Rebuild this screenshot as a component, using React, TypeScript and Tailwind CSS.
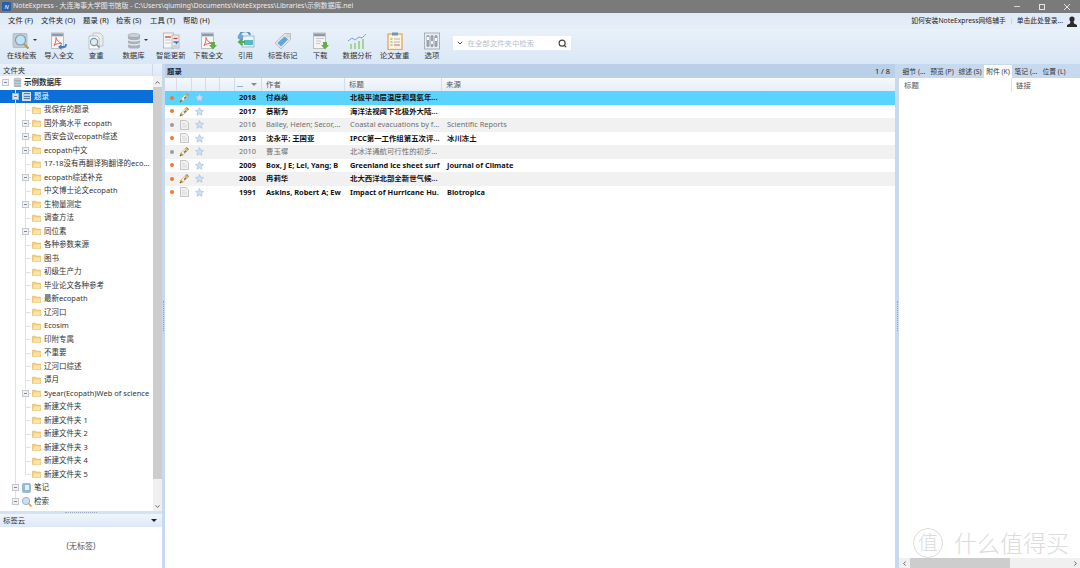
import React from 'react';
import { ChevronUp, ChevronDown, ChevronLeft, ChevronRight, Search } from 'lucide-react';

const Folder = () => (
  <svg width="9" height="8" viewBox="0 0 9 8" className="shrink-0">
    <path d="M.5 1.2h3l.8.9h4.2v5.4h-8z" fill="#f6cf7a" stroke="#e0b155" strokeWidth=".6" />
    <path d="M.8 7.400 2 3.400h6.800l-1 4z" fill="#fde4a6" />
  </svg>
);

const Db = ({ s = 18, c = '#a9b2ba' }: { s?: number; c?: string }) => (
  <svg width={s} height={s} viewBox="0 0 18 18" className="shrink-0">
    <rect x="3" y="2" width="12" height="14.500" rx="2.500" fill={c} />
    <ellipse cx="9" cy="3.500" rx="6" ry="2" fill="#ccd2d7" stroke="#8e979f" strokeWidth=".5" />
    <path d="M3 7.500c2 1.800 10 1.800 12 0M3 11.500c2 1.800 10 1.800 12 0" fill="none" stroke="#e8ecef" strokeWidth="1.100" />
  </svg>
);

const Expander = ({ dark }: { dark?: boolean }) => (
  <span className={`relative z-10 flex h-[7px] w-[7px] items-center justify-center border ${dark ? 'border-[#9db7d8] bg-[#d7e4f3]' : 'border-[#c4c9d0] bg-[#eef1f5]'}`}>
    <span className="h-px w-[3px] bg-[#7b8794]" />
  </span>
);

const Cell = ({ v, vHalf, h, exp, dark }: { v?: boolean; vHalf?: boolean; h?: boolean; exp?: boolean; dark?: boolean }) => (
  <span className="relative flex h-full w-[10px] shrink-0 items-center justify-center">
    {v && <span className={`absolute left-[5px] top-0 w-0 border-l border-[#e2e2e2] ${vHalf ? 'h-1/2' : 'h-full'}`} />}
    {h && <span className="absolute left-[5px] top-1/2 w-[6px] border-t border-[#e2e2e2]" />}
    {exp && <Expander dark={dark} />}
  </span>
);

const folders: [string, boolean][] = [
  ['我保存的题录', false],
  ['国外高水平 ecopath', true],
  ['西安会议ecopath综述', true],
  ['ecopath中文', true],
  ['17-18没有再翻译狗翻译的eco...', false],
  ['ecopath综述补充', true],
  ['中文博士论文ecopath', false],
  ['生物量测定', true],
  ['调查方法', false],
  ['同位素', true],
  ['各种参数来源', false],
  ['图书', false],
  ['初级生产力', false],
  ['毕业论文各种参考', false],
  ['最新ecopath', false],
  ['辽河口', false],
  ['Ecosim', false],
  ['印附专属', false],
  ['不重要', false],
  ['辽河口综述', false],
  ['谭月', false],
  ['5year(Ecopath)Web of science', true],
  ['新建文件夹', false],
  ['新建文件夹 1', false],
  ['新建文件夹 2', false],
  ['新建文件夹 3', false],
  ['新建文件夹 4', false],
  ['新建文件夹 5', false],
];

const FolderRow = ({ name, exp, last }: { name: string; exp: boolean; last: boolean }) => (
  <div className="flex h-[13.5px] items-center leading-[13.5px]">
    <Cell />
    <Cell v />
    <Cell v vHalf={last} h exp={exp} />
    <span className="flex w-[14px] shrink-0 justify-start pl-[2px]"><Folder /></span>
    <span className="whitespace-nowrap">{name}</span>
  </div>
);

const Tree = () => (
  <div className="min-w-0 flex-1 overflow-hidden text-[7.5px]">
    <div className="flex h-[13.5px] items-center leading-[13.5px]">
      <Cell exp />
      <span className="flex w-[14px] shrink-0 items-center pl-[2px]"><Db s={11} /></span>
      <span className="font-bold">示例数据库</span>
    </div>
    <div className="flex h-[13.5px] items-center bg-[#0a6fd8] leading-[13.5px] text-white">
      <Cell />
      <Cell v exp dark />
      <span className="flex w-[14px] shrink-0 items-center pl-[2px]">
        <span className="flex h-[9px] w-[9px] flex-col justify-around border border-[#d6e3f2] bg-[#bcd2ea] pl-px"><span className="h-px w-[6px] bg-[#5a7ea6]" /><span className="h-px w-[6px] bg-[#5a7ea6]" /><span className="h-px w-[6px] bg-[#5a7ea6]" /></span>
      </span>
      <span>题录</span>
    </div>
    {folders.map(([n, e], i) => <FolderRow key={n} name={n} exp={e} last={i === folders.length - 1} />)}
    <div className="flex h-[13.5px] items-center leading-[13.5px]">
      <Cell />
      <Cell v exp />
      <span className="flex w-[14px] shrink-0 items-center pl-[2px]">
        <svg width="9" height="10" viewBox="0 0 9 10"><rect x=".5" y=".5" width="8" height="9" rx="1" fill="#8fb8dc" stroke="#6f9ac0" strokeWidth=".5" /><rect x="3" y="2" width="4" height="5" fill="#e8f1f9" /></svg>
      </span>
      <span>笔记</span>
    </div>
    <div className="flex h-[13.5px] items-center leading-[13.5px]">
      <Cell />
      <Cell v vHalf exp />
      <span className="flex w-[14px] shrink-0 items-center pl-[1px]">
        <svg width="11" height="11" viewBox="0 0 11 11"><circle cx="5" cy="5" r="3.600" fill="#c7e2f5" stroke="#9db0c0" /><path d="m7.500 7.500 3 3" stroke="#d9a441" strokeWidth="1.600" /></svg>
      </span>
      <span>检索</span>
    </div>
  </div>
);

const Star = () => (
  <svg width="9" height="9" viewBox="0 0 10 10"><path d="m5 .6 1.350 2.900 3.150.4-2.300 2.150.6 3.150L5 7.700 2.200 9.200l.6-3.150L.5 3.900l3.150-.4z" fill="#cfdff2" stroke="#a5bddb" strokeWidth=".7" /></svg>
);

const Clip = () => (
  <svg width="11" height="11" viewBox="0 0 11 11">
    <path d="M2 9 9 2" stroke="#d9b063" strokeWidth="3.600" />
    <path d="M3.400 7.600 6.800 4.200" stroke="#f7f3ea" strokeWidth="2.400" />
    <path d="M5.200 6.600 7 4.800" stroke="#6a5f95" strokeWidth="1.400" />
    <path d="M1 10 2.500 8.500" stroke="#6d5a34" strokeWidth="1.300" />
    <path d="M7.500 1.500 9.500 3.500" stroke="#8d7fa8" strokeWidth="1" />
  </svg>
);

const Doc = () => (
  <svg width="9" height="10" viewBox="0 0 9 10"><path d="M.5.5h5.400L8.500 3v6.500h-8z" fill="#f1f1f1" stroke="#b0b0b0" strokeWidth=".7" /><path d="M2 3.500h3M2 5.200h5M2 7h5" stroke="#cfcfcf" strokeWidth=".6" /></svg>
);

type Row = { y: string; a: string; t: string; s: string; bold: boolean; clip: boolean; alt?: boolean; sel?: boolean };
const rows: Row[] = [
  { y: '2018', a: '付焱焱', t: '北极平流层温度和臭氧年...', s: '', bold: true, clip: true, sel: true },
  { y: '2017', a: '蔡斯为', t: '海洋法视阈下北极外大陆...', s: '', bold: true, clip: true },
  { y: '2016', a: 'Bailey, Helen; Secor,...', t: 'Coastal evacuations by f...', s: 'Scientific Reports', bold: false, clip: false, alt: true },
  { y: '2013', a: '沈永平; 王国亚', t: 'IPCC第一工作组第五次评...', s: '冰川冻土', bold: true, clip: false },
  { y: '2010', a: '曹玉墀', t: '北冰洋通航可行性的初步...', s: '', bold: false, clip: true, alt: true },
  { y: '2009', a: 'Box, J E; Lei, Yang; B', t: 'Greenland ice sheet surf', s: 'Journal of Climate', bold: true, clip: false },
  { y: '2008', a: '冉莉华', t: '北大西洋北部全新世气候...', s: '', bold: true, clip: true, alt: true },
  { y: '1991', a: 'Askins, Robert A; Ew', t: 'Impact of Hurricane Hu.', s: 'Biotropica', bold: true, clip: false },
];
const cols = 'grid grid-cols-[12px_15px_14px_14px_15px_27px_83px_97px_1fr]';

const Table = () => (
  <div className="flex-1 overflow-hidden bg-white">
    <div className={`${cols} h-[13px] bg-gradient-to-b from-[#f7f9fc] to-[#e6eef8] leading-[13px] text-[#555]`}>
      {['', '', '', '', ''].map((_, i) => <span key={i} className="border-r border-[#d3dde9]" />)}
      <span className="flex items-center justify-between border-r border-[#d3dde9] px-[2px]"><span>...</span><span className="mr-[2px] h-0 w-0 border-x-[3px] border-t-[3px] border-x-transparent border-t-[#8a8a8a]" /></span>
      <span className="flex items-center border-r border-[#d3dde9] pl-[4px]">作者</span>
      <span className="flex items-center border-r border-[#d3dde9] pl-[4px]">标题</span>
      <span className="flex items-center pl-[4px]">来源</span>
    </div>
    {rows.map(r => (
      <div key={r.y} className={`${cols} h-[13.5px] items-center leading-[13.5px] ${r.sel ? 'bg-[#5ad3ff]' : r.alt ? 'bg-[#f1f1f1]' : 'bg-white'} ${r.bold ? 'font-bold text-[#111]' : 'text-[#6e6e6e]'}`}>
        <span className="flex justify-center pl-[2px]"><span className={`h-[4px] w-[4px] rounded-full ${r.bold ? 'bg-[#f4772a]' : 'bg-[#9a9a9a]'}`} /></span>
        <span className="flex justify-center">{r.clip ? <Clip /> : <Doc />}</span>
        <span className="flex justify-center"><Star /></span>
        <span />
        <span />
        <span className="pl-[4px]">{r.y}</span>
        <span className="overflow-hidden whitespace-nowrap pl-[4px] pr-px">{r.a}</span>
        <span className="overflow-hidden whitespace-nowrap pl-[5px] pr-[2px]">{r.t}</span>
        <span className="whitespace-nowrap pl-[5px]">{r.s}</span>
      </div>
    ))}
  </div>
);

const PageHead = () => <><rect x="2.500" y="1" width="12" height="15.500" fill="#f5f5f5" stroke="#a8a8a8" strokeWidth=".7" /><rect x="3" y="1.500" width="11" height="2.800" fill="#8b99a8" /></>;
const Pdf = () => <path d="M5 13.500c2-3 2-6 2-8 1 3 3 5 6 6-3-.3-6 .3-8 2z" fill="none" stroke="#e0625a" strokeWidth="1" />;
const Down = () => <path d="M12 10h4v3h2l-4 4.500-4-4.500h2z" fill="#62b045" />;

const tools: [string, React.ReactNode, boolean?][] = [
  ['在线检索', <svg width="20" height="18" viewBox="0 0 20 18"><rect x="1" y="1.500" width="14" height="14" rx="1" fill="#c3cdd6" stroke="#a3b1be" strokeWidth=".7" /><circle cx="8.500" cy="8" r="5" fill="#bfe3f4" stroke="#7f99ab" strokeWidth="1.100" /><path d="m12 12 4.500 4.500" stroke="#c8973a" strokeWidth="2.200" /></svg>, true],
  ['导入全文', <svg width="19" height="18" viewBox="0 0 19 18"><PageHead /><Pdf /><path d="M10 15h5c1.500 0 2-1 2-3" fill="none" stroke="#3f7fcb" strokeWidth="1.800" /><path d="m12.500 12-3.500 3 3.500 3z" fill="#3f7fcb" /></svg>],
  ['查重', <svg width="18" height="18" viewBox="0 0 18 18"><path d="M6 1h7l3 3v10H6z" fill="#ececec" stroke="#b5b5b5" strokeWidth=".7" /><path d="M2 4h8l2 2v11H2z" fill="#fafafa" stroke="#adadad" strokeWidth=".7" /><circle cx="7" cy="10" r="3.600" fill="#dcecf5" stroke="#7e93a2" strokeWidth="1.100" /><path d="m9.500 12.500 3 3" stroke="#7e93a2" strokeWidth="1.500" /></svg>],
  ['数据库', <Db />, true],
  ['智能更新', <svg width="18" height="18" viewBox="0 0 18 18"><rect x="1.500" y="1" width="10" height="15" fill="#f7f7f7" stroke="#a5a5a5" strokeWidth=".7" /><rect x="10" y="3" width="7" height="13" fill="#e6ebf1" stroke="#a5a5a5" strokeWidth=".7" /><path d="M3 5h6" stroke="#d9402f" strokeWidth="1.300" /><path d="M3 8h6M3 11h6" stroke="#c4cbd3" /><path d="M11.500 6.500h4" stroke="#d9402f" strokeWidth="1.300" /><path d="M11.500 10h4l-1.500 2" stroke="#3e78c0" strokeWidth="1.500" fill="none" /><path d="M11.500 14h4" stroke="#9bb4d0" /></svg>],
  ['下载全文', <svg width="19" height="18" viewBox="0 0 19 18"><PageHead /><Pdf /><Down /></svg>],
  ['引用', <svg width="19" height="18" viewBox="0 0 19 18"><path d="M4 6a5 5 0 0 1 10-3" fill="none" stroke="#5a94cf" strokeWidth="2.200" /><rect x="6" y="4" width="12" height="11" fill="#eef3f8" stroke="#86a6c6" strokeWidth=".7" /><circle cx="4.500" cy="5" r="2.800" fill="#6fa8d8" /><path d="M8 8h9v5H8z" fill="#58b9c4" /><path d="M9 10 4 10m2.500-3-3.500 3 3.500 3" fill="none" stroke="#5aaa4a" strokeWidth="2" /></svg>],
  ['标签标记', <svg width="18" height="18" viewBox="0 0 18 18"><path d="M10.500 1.500h6v6L7 17l-6-6z" fill="#e4e4e4" stroke="#b3b3b3" strokeWidth=".8" /><path d="m10.500 4.500-7 6.500 3.500 3.500 7-7z" fill="#5ea6dc" /><circle cx="14" cy="4" r="1.200" fill="#fff" stroke="#999" strokeWidth=".5" /></svg>],
  ['下载', <svg width="18" height="18" viewBox="0 0 18 18"><PageHead /><path d="M5 6.500h8M5 9h5M5 11.500h4" stroke="#c5c5c5" /><Down /></svg>],
  ['数据分析', <svg width="20" height="18" viewBox="0 0 20 18"><path d="M1 9l4-3 3 2 4-3 3 1 4-4" fill="none" stroke="#5a94c8" strokeWidth="1" strokeDasharray="2 .5" /><path d="M3 12h2v5H3zM7 11h2v6H7zM11 9h2v8h-2zM15 7h2v10h-2z" fill="#a9d29a" /></svg>],
  ['论文查重', <svg width="16" height="18" viewBox="0 0 16 18"><rect x="1" y="2" width="14" height="15.500" fill="#fdf6e6" stroke="#eba54f" strokeWidth="1.300" /><rect x="5" y=".5" width="6" height="3" fill="#7a93ad" /><path d="M3.500 7h2M3.500 10h2M3.500 13h2" stroke="#5aa565" /><path d="M7 7h6M7 10h6" stroke="#b9b09b" /><path d="M7 13h6" stroke="#db5c55" /></svg>],
  ['选项', <svg width="16" height="18" viewBox="0 0 16 18"><rect x=".5" y="1" width="15" height="16" fill="#e9edf2" stroke="#a8b0ba" /><rect x="2.500" y="3" width="3" height="12" rx="1.500" fill="#98a2ae" /><rect x="6.500" y="3" width="3" height="12" rx="1.500" fill="#98a2ae" /><rect x="10.500" y="3" width="3" height="12" rx="1.500" fill="#98a2ae" /><rect x="3" y="5" width="2" height="3" fill="#fff" /><rect x="7" y="9" width="2" height="3" fill="#fff" /><rect x="11" y="6" width="2" height="3" fill="#fff" /></svg>],
];

const Toolbar = () => (
  <div className="flex h-[35px] items-start bg-gradient-to-b from-[#e9f1fa] to-[#d9e7f6] pl-[3px] pt-[3px]">
    {tools.map(([n, icon, drop]) => (
      <div key={n} className="flex w-[37.3px] shrink-0 flex-col items-center">
        <div className="relative flex h-[18px] items-center justify-center">
          {icon}
          {drop && <span className="absolute -right-[5px] top-[7px] h-0 w-0 border-x-[2px] border-t-[2px] border-x-transparent border-t-[#333]" />}
        </div>
        <span className="whitespace-nowrap leading-[10px]">{n}</span>
      </div>
    ))}
    <div className="ml-[2px] mt-[4px] flex h-[14px] w-[118px] items-center bg-white pl-[3px] pr-[4px] leading-[14px] text-[#b9c0c9]">
      <ChevronDown size={8} strokeWidth={3} className="text-[#555]" />
      <span className="ml-[4px] flex-1">在全部文件夹中检索</span>
      <Search size={9} strokeWidth={3} className="text-[#444]" />
    </div>
  </div>
);

const tabs = ['细节 (...', '预览 (P)', '综述 (S)', '附件 (K)', '笔记 (...', '位置 (L)'];

const App = () => (
  <div className="relative flex h-[568px] w-[1080px] flex-col overflow-hidden bg-[#d3e3f4] text-[7.4px] leading-none text-[#333]" style={{ fontFamily: '"Noto Sans", "Noto Sans CJK SC", sans-serif' }}>
    <div className="flex h-[13px] items-center bg-[#7a7a7a] pl-[2px] text-[#ececec]">
      <span className="flex h-[9px] w-[9px] items-center justify-center rounded-[1px] bg-[#2a5fa8] text-[6px] italic text-white">N</span>
      <span className="ml-[2px] whitespace-nowrap text-[6.9px]">NoteExpress - 大连海事大学图书馆版 - C:\Users\qiuming\Documents\NoteExpress\Libraries\示例数据库.nel</span>
      <div className="ml-auto flex items-center gap-[19px] pr-[10px]">
        <span className="h-px w-[6px] bg-[#d5d5d5]" />
        <span className="h-[6px] w-[6px] border border-[#e5e5e5]" />
        <svg width="6" height="6" viewBox="0 0 6 6"><path d="m0 0 6 6M6 0 0 6" stroke="#e5e5e5" /></svg>
      </div>
    </div>

    <div className="flex h-[16px] items-center bg-gradient-to-b from-[#dfeaf7] to-[#e6eff9] pl-[8px] text-[#222]">
      {[['文件 (F)', 'w-[33px]'], ['文件夹 (O)', 'w-[42px]'], ['题录 (R)', 'w-[33px]'], ['检索 (S)', 'w-[34px]'], ['工具 (T)', 'w-[33px]'], ['帮助 (H)', 'w-[33px]']].map(([m, w]) => <span key={m} className={w}>{m}</span>)}
      <div className="ml-auto flex items-center pr-[3px] text-[6.8px]">
        <span className="border-r border-[#c8d6e6] pr-[5px]">如何安装NoteExpress网络辅手</span>
        <span className="ml-[5px]">单击此处登录...</span>
        <svg width="10" height="11" viewBox="0 0 10 11" className="ml-[4px]"><circle cx="5" cy="3" r="2.600" fill="#2b2b2b" /><path d="M3.500 5h3l.5 2.500 3 1.500v2H0V9l3-1.500z" fill="#2b2b2b" /></svg>
      </div>
    </div>

    <Toolbar />

    <div className="flex min-h-0 flex-1 bg-[#c6d9ef]">
      <div className="flex w-[162px] shrink-0 flex-col">
        <div className="flex h-[12px] items-center bg-gradient-to-b from-[#e9f1fb] to-[#dfe9f6] pl-[3px] leading-[12px]">
          <span className="flex-1">文件夹</span>
          <span className="mr-[9px] h-full w-px bg-[#ccd9e8]" />
        </div>
        <div className="flex min-h-0 flex-1 bg-white">
          <Tree />
          <div className="flex w-[9px] shrink-0 flex-col items-center bg-[#f0f0f0] text-[#555]">
            <ChevronUp size={7} strokeWidth={3} className="mt-[3px] shrink-0" />
            <div className="mt-[1px] h-[392px] w-full bg-[#cdcdcd]" />
            <ChevronDown size={7} strokeWidth={3} className="mt-auto mb-[1px] shrink-0" />
          </div>
        </div>
        <div className="flex h-[3px] items-center justify-center bg-[#d4e2f2]"><span className="w-[32px] border-t border-dotted border-[#9bb0c8]" /></div>
        <div className="flex h-[13px] items-center justify-between bg-gradient-to-b from-[#f0f5fc] to-[#dde8f7] pl-[3px] pr-[5px] leading-[13px]">
          <span>标签云</span>
          <span className="h-0 w-0 border-x-[3px] border-t-[3px] border-x-transparent border-t-[#222]" />
        </div>
        <div className="flex h-[41px] justify-center bg-white pt-[15px] text-[8px] text-[#555]">(无标签)</div>
      </div>

      <div className="flex w-[3px] shrink-0 items-center justify-center"><span className="h-[30px] border-l border-dotted border-[#8fa6c0]" /></div>

      <div className="flex w-[730px] shrink-0 flex-col">
        <div className="flex h-[14px] items-center justify-between bg-[#b9d0e8] pl-[2px] pr-[5px] leading-[14px] text-[#222]">
          <span className="font-bold">题录</span>
          <span>1 / 8</span>
        </div>
        <Table />
      </div>

      <div className="flex w-[4px] shrink-0 items-center justify-center bg-[#c6d9ef]"><span className="h-[30px] border-l border-dotted border-[#8fa6c0]" /></div>

      <div className="flex min-w-0 flex-1 flex-col">
        <div className="flex h-[14px] items-end bg-[#c6d9ef] pl-[1px] text-[6.8px]">
          {tabs.map(t => <span key={t} className={`flex h-[13px] w-[28px] items-center justify-center whitespace-nowrap leading-[13px] ${t.startsWith('附件') ? 'bg-white' : ''}`}>{t}</span>)}
        </div>
        <div className="flex min-h-0 flex-1 flex-col bg-white">
          <div className="grid h-[14px] grid-cols-[113px_1fr] items-center leading-[14px] text-[#555]">
            <span className="border-r border-[#e3e3e3] pl-[5px]">标题</span>
            <span className="pl-[4px]">链接</span>
          </div>
          <div className="flex-1" />
          <div className="flex h-[10px] shrink-0 items-center bg-[#f0f0f0] text-[#555]">
            <ChevronLeft size={7} strokeWidth={3} className="ml-[2px] shrink-0" />
            <div className="ml-[2px] h-full w-[100px] bg-[#cdcdcd]" />
            <ChevronRight size={7} strokeWidth={3} className="ml-auto mr-[1px] shrink-0" />
          </div>
        </div>
      </div>
    </div>

    <div className="pointer-events-none absolute bottom-[10px] left-[913px] flex items-center text-[#dcdcdc]">
      <span className="flex h-[30px] w-[30px] items-center justify-center rounded-full border border-[#dcdcdc] text-[20px] font-light">值</span>
      <span className="ml-[11px] whitespace-nowrap text-[23px] font-light leading-none">什么值得买</span>
    </div>
  </div>
);

export default App;
